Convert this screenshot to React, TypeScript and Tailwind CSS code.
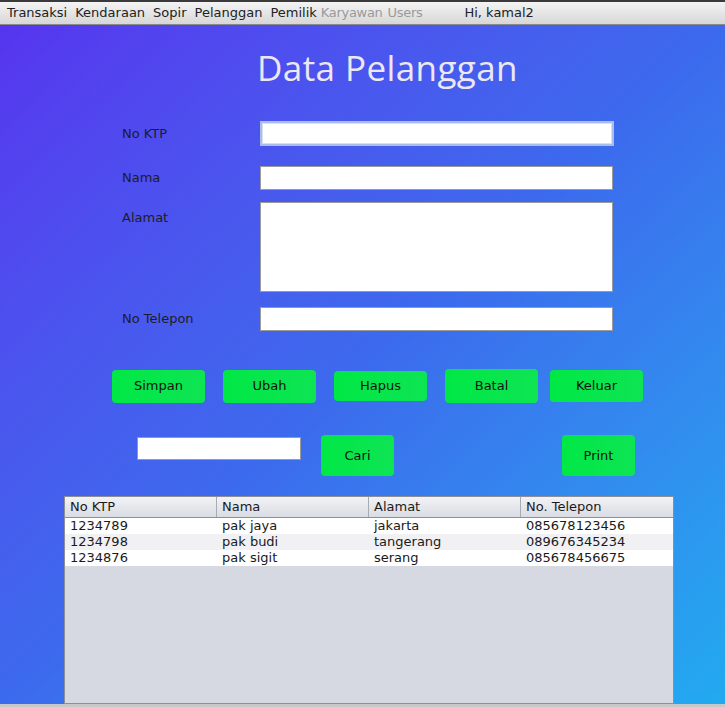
import React from "react";

const rows = [
  ["1234789", "pak jaya", "jakarta", "085678123456"],
  ["1234798", "pak budi", "tangerang", "089676345234"],
  ["1234876", "pak sigit", "serang", "085678456675"],
];

const menu = ["Transaksi", "Kendaraan", "Sopir", "Pelanggan", "Pemilik"];

function Btn({ label, className = "" }: { label: string; className?: string }) {
  return (
    <button
      className={`rounded-[4px] bg-gradient-to-r from-[#00e845] to-[#0ee453] text-[13px] text-[#111] ${className}`}
    >
      {label}
    </button>
  );
}

export default function App() {
  return (
    <div className="w-[725px] h-[707px] overflow-hidden flex flex-col font-['DejaVu_Sans',sans-serif] bg-[#c8c8c8]">
      {/* menu bar */}
      <div className="border-t-2 border-[#3a3a3a] border-b border-b-[#8a8a8a] h-[25px] flex items-center bg-gradient-to-b from-[#f4f4f4] to-[#d7d7d7] text-[13px] text-[#222] px-[7px] gap-[8px]">
        {menu.map((m) => (
          <span key={m}>{m}</span>
        ))}
        <span className="text-[#9a9a9a] -ml-[4px] tracking-[-0.3px]">Karyawan</span>
        <span className="text-[#9a9a9a] -ml-[3px] tracking-[-0.3px]">Users</span>
        <span className="ml-[34px]">Hi, kamal2</span>
      </div>

      {/* body */}
      <div className="h-[679px] bg-gradient-to-br from-[#5634ef] via-[#3c6aed] to-[#21aaef] flex flex-col">
        <h1 className="mt-[21px] h-[44px] leading-[44px] text-center pl-[50px] text-[35px] text-[#ebe8f3] font-['Open_Sans',sans-serif] tracking-[0.4px]">
          Data Pelanggan
        </h1>

        <div className="mt-[31px] flex flex-col text-[13px] text-[#1c1c2a]">
          <div className="flex items-center">
            <span className="w-[260px] pl-[122px]">No KTP</span>
            <div className="w-[354px] h-[25px] bg-white border-2 border-[#a9bde6] shadow-[inset_0_0_0_1px_#d8e0f0]" />
          </div>
          <div className="flex items-center mt-[20px]">
            <span className="w-[260px] pl-[122px]">Nama</span>
            <div className="w-[353px] h-[24px] bg-white border border-[#9a9a9a]" />
          </div>
          <div className="flex items-start mt-[12px]">
            <span className="w-[260px] pl-[122px] mt-[6px]">Alamat</span>
            <div className="w-[353px] h-[90px] bg-white border border-[#9a9a9a]" />
          </div>
          <div className="flex items-center mt-[15px]">
            <span className="w-[260px] pl-[122px]">No Telepon</span>
            <div className="w-[353px] h-[24px] bg-white border border-[#9a9a9a]" />
          </div>
        </div>

        <div className="mt-[38px] flex items-center pl-[112px] h-[34px]">
          <Btn label="Simpan" className="w-[93px] h-[33px]" />
          <Btn label="Ubah" className="w-[93px] h-[33px] ml-[18px]" />
          <Btn label="Hapus" className="w-[93px] h-[30px] ml-[18px]" />
          <Btn label="Batal" className="w-[93px] h-[34px] ml-[18px]" />
          <Btn label="Keluar" className="w-[93px] h-[32px] ml-[12px]" />
        </div>

        <div className="mt-[32px] flex items-start h-[41px]">
          <div className="mt-[2px] ml-[137px] w-[164px] h-[23px] bg-white border border-[#9a9a9a]" />
          <Btn label="Cari" className="ml-[20px] w-[73px] h-[41px]" />
          <Btn label="Print" className="ml-[168px] w-[73px] h-[41px]" />
        </div>

        {/* table */}
        <div className="mt-[20px] ml-[64px] w-[610px] h-[208px] border border-[#8e8e96] bg-[#d6d9e1] text-[13px] text-[#1a1a1a] flex flex-col">
          <div className="grid grid-cols-4 h-[21px] bg-gradient-to-b from-[#f2f3f6] to-[#d9dce3] border-b border-[#8e8e96]">
            {["No KTP", "Nama", "Alamat", "No. Telepon"].map((h, i) => (
              <div
                key={h}
                className={`px-[5px] leading-[20px] ${i < 3 ? "border-r border-[#a9abb3]" : ""}`}
              >
                {h}
              </div>
            ))}
          </div>
          {rows.map((r, i) => (
            <div
              key={r[0]}
              className={`grid grid-cols-4 h-[16px] leading-[16px] ${i % 2 === 1 ? "bg-[#f1f1f3]" : "bg-white"}`}
            >
              {r.map((c, j) => (
                <div key={j} className="px-[5px]">
                  {c}
                </div>
              ))}
            </div>
          ))}
        </div>
      </div>
    </div>
  );
}
